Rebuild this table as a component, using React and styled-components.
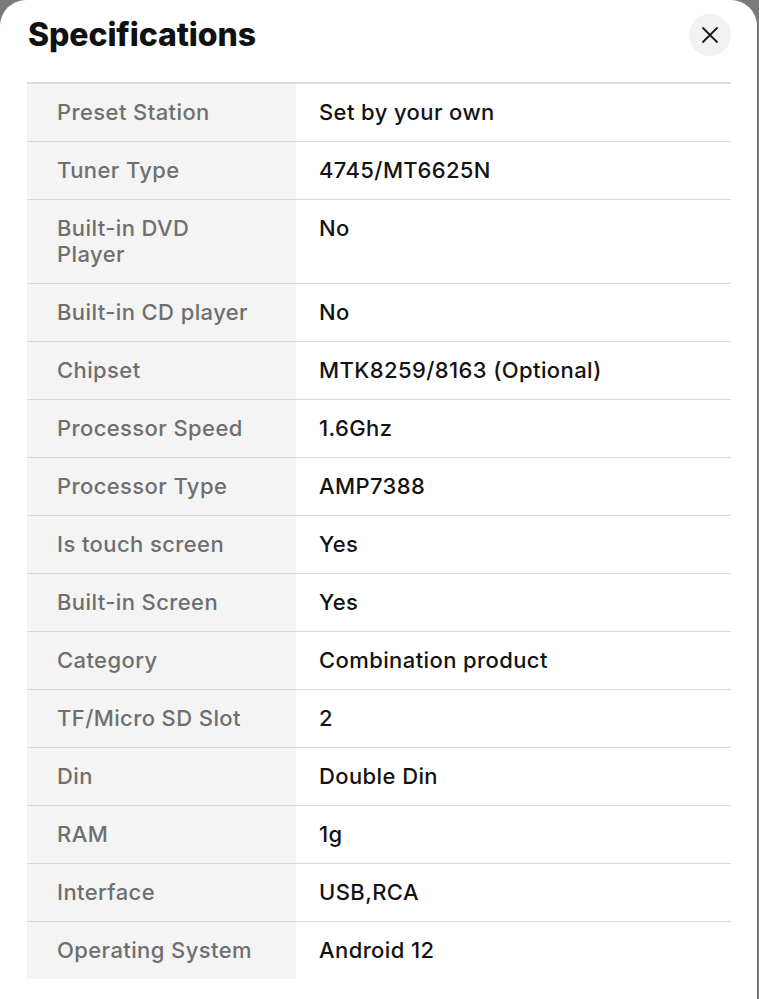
import React from "react";
import styled, { createGlobalStyle } from "styled-components";

const specs = [
  ["Preset Station", "Set by your own"],
  ["Tuner Type", "4745/MT6625N"],
  ["Built-in DVD Player", "No"],
  ["Built-in CD player", "No"],
  ["Chipset", "MTK8259/8163 (Optional)"],
  ["Processor Speed", "1.6Ghz"],
  ["Processor Type", "AMP7388"],
  ["Is touch screen", "Yes"],
  ["Built-in Screen", "Yes"],
  ["Category", "Combination product"],
  ["TF/Micro SD Slot", "2"],
  ["Din", "Double Din"],
  ["RAM", "1g"],
  ["Interface", "USB,RCA"],
  ["Operating System", "Android 12"],
];

const GlobalStyle = createGlobalStyle`
  html, body {
    margin: 0;
    padding: 0;
    background: #7a7a7a;
    font-family: Inter, "Noto Sans", sans-serif;
  }
`;

const Sheet = styled.div`
  width: 757px;
  height: 999px;
  background: #fff;
  border-radius: 26px 26px 0 0;
  box-sizing: border-box;
  padding: 14px 28px 0 27px;
  overflow: hidden;
`;

const Header = styled.div`
  display: flex;
  align-items: center;
  justify-content: space-between;
  height: 42px;
  margin-bottom: 26px;
`;

const Title = styled.h1`
  margin: -2px 0 0 1px;
  font-size: 32px;
  font-weight: 800;
  color: #111;
  letter-spacing: -0.1px;
`;

const CloseButton = styled.button`
  width: 42px;
  height: 42px;
  border-radius: 50%;
  border: none;
  background: #f2f2f2;
  display: flex;
  align-items: center;
  justify-content: center;
  padding: 0;
  margin-right: -2px;
  cursor: pointer;
`;

const Table = styled.div`
  border-top: 2px solid #dcdcdc;
  width: 704px;
`;

const Row = styled.div`
  display: grid;
  grid-template-columns: 269px 1fr;
  border-bottom: ${(p) => (p.$last ? "none" : "1.5px solid #d9d9d9")};
`;

const Cell = styled.div`
  font-size: 22px;
  font-weight: 500;
  line-height: 26px;
  letter-spacing: 0.4px;
  padding-top: 15px;
  padding-bottom: 16px;
`;

const Label = styled(Cell)`
  background: #f4f4f4;
  color: #6f6f6f;
  padding-left: 30px;
  padding-right: 38px;
`;

const Value = styled(Cell)`
  color: #131313;
  padding-left: 23px;
  padding-right: 20px;
`;

const XIcon = () => (
  <svg width="20" height="20" viewBox="0 0 20 20" fill="none">
    <path d="M3 3L17 17M17 3L3 17" stroke="#1a1a1a" strokeWidth="1.8" strokeLinecap="round" />
  </svg>
);

export default function App() {
  return (
    <>
      <GlobalStyle />
      <Sheet>
        <Header>
          <Title>Specifications</Title>
          <CloseButton aria-label="Close">
            <XIcon />
          </CloseButton>
        </Header>
        <Table>
          {specs.map(([label, value], i) => (
            <Row key={label} $last={i === specs.length - 1}>
              <Label>{label}</Label>
              <Value>{value}</Value>
            </Row>
          ))}
        </Table>
      </Sheet>
    </>
  );
}
